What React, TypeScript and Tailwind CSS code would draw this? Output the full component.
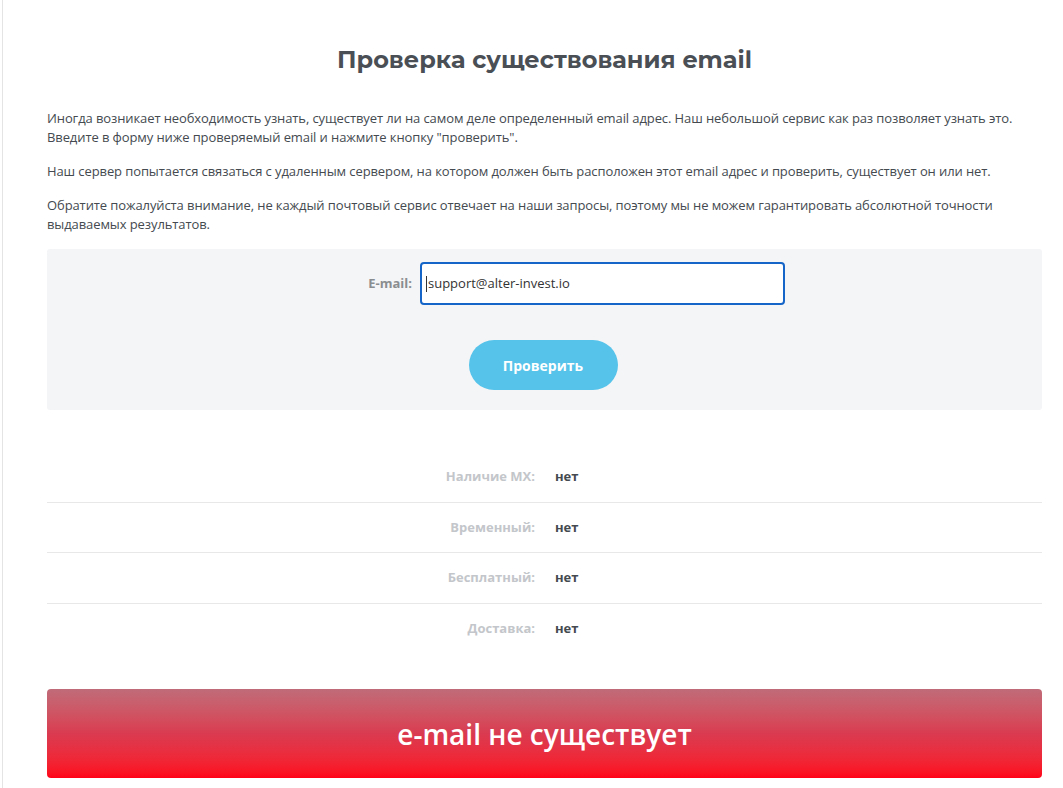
import React from "react";

const rows = [
  { label: "Наличие MX:", value: "нет" },
  { label: "Временный:", value: "нет" },
  { label: "Бесплатный:", value: "нет" },
  { label: "Доставка:", value: "нет" },
];

const App = () => {
  return (
    <div className="min-h-screen bg-white pl-[2px] font-['Open_Sans',sans-serif]">
      <div className="min-h-screen border-l border-[#e4e4e4] pl-[44px]">
        <div className="w-[995px]">
          {/* Title */}
          <h1 className="pt-[44px] text-center text-[24px] font-bold leading-[32px] text-[#4a4f55] font-['Montserrat','Open_Sans',sans-serif]">
            Проверка существования email
          </h1>

          {/* Description */}
          <div className="mt-[33px] text-[13px] leading-[19px] tracking-[-0.1px] text-[#444a50]">
            <p>
              Иногда возникает необходимость узнать, существует ли на самом деле определенный email адрес. Наш небольшой сервис как раз позволяет узнать это.
              <br />
              Введите в форму ниже проверяемый email и нажмите кнопку "проверить".
            </p>
            <p className="mt-[15px]">
              Наш сервер попытается связаться с удаленным сервером, на котором должен быть расположен этот email адрес и проверить, существует он или нет.
            </p>
            <p className="mt-[15px]">
              Обратите пожалуйста внимание, не каждый почтовый сервис отвечает на наши запросы, поэтому мы не можем гарантировать абсолютной точности выдаваемых результатов.
            </p>
          </div>

          {/* Form */}
          <div className="mt-[15px] rounded-[3px] bg-[#f4f5f7] pt-[13px] pb-[20px]">
            <div className="flex items-center">
              <label className="w-[366px] pr-[1px] text-right text-[13px] font-bold text-[#8a8d90]">
                E-mail:
              </label>
              <div className="ml-[7px] flex h-[43px] w-[365px] items-center rounded-[4px] border-2 border-[#1565c8] bg-white px-[4px] text-[13px] text-[#333]">
                <span className="mr-[1px] h-[16px] w-px bg-[#333]" />
                support@alter-invest.io
              </div>
            </div>
            <div className="mt-[35px] flex justify-center">
              <button className="ml-[-3px] h-[50px] w-[149px] rounded-full bg-[#56c3ea] text-[14px] font-bold text-white">
                Проверить
              </button>
            </div>
          </div>

          {/* Results */}
          <div className="mt-[42px]">
            {rows.map((r, i) => (
              <div
                key={r.label}
                className={
                  "flex h-[50.5px] items-center text-[13px] font-bold " +
                  (i < rows.length - 1 ? "border-b border-[#e8e8e8]" : "")
                }
              >
                <span className="w-[488px] text-right text-[#c3c6ca]">{r.label}</span>
                <span className="ml-[20px] text-[#454a50]">{r.value}</span>
              </div>
            ))}
          </div>

          {/* Status banner */}
          <div className="mt-[35px] flex h-[89px] items-center justify-center rounded-[4px] bg-gradient-to-b from-[#c06b79] via-[#da3a50] to-[#ff0017] text-[28px] font-semibold text-white">
            e-mail не существует
          </div>
        </div>
      </div>
    </div>
  );
};

export default App;
